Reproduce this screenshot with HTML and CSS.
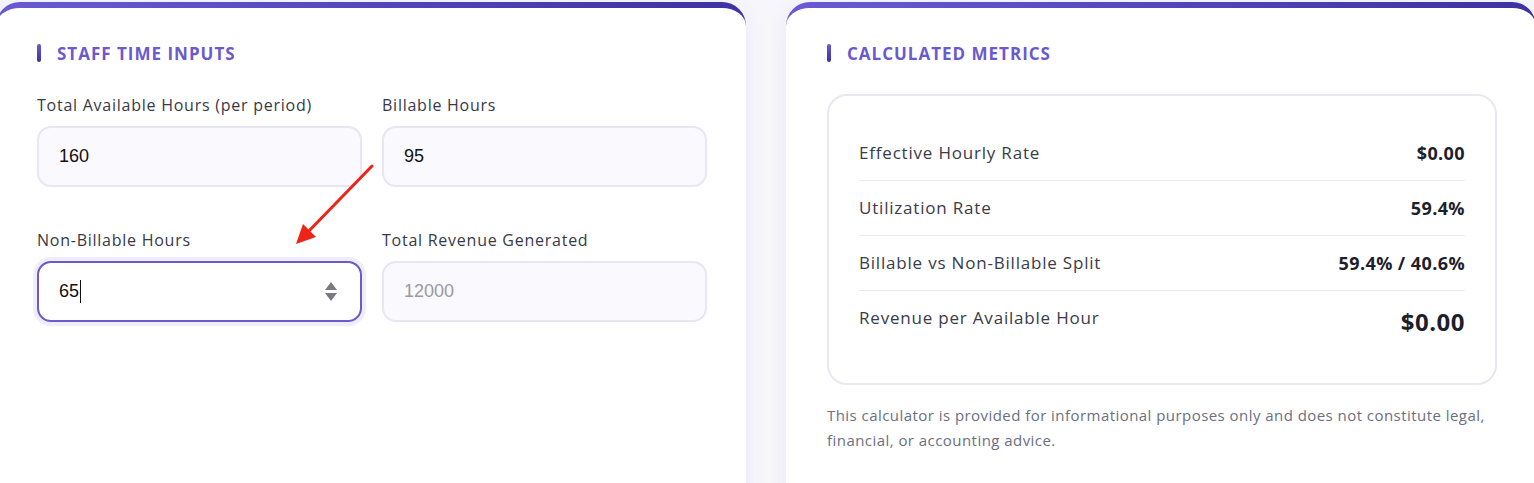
FILE: index.html
```html
<!DOCTYPE html>
<html lang="en">
<head>
<meta charset="utf-8">
<title>Staff Time Calculator</title>
<link rel="stylesheet" href="styles.css">
</head>
<body>
<div class="page">
  <section class="card">
    <h2 class="section-title"><span class="accent"></span>STAFF TIME INPUTS</h2>
    <div class="form-grid">
      <div class="field">
        <label class="label">Total Available Hours (per period)</label>
        <input class="input" type="text" value="160">
      </div>
      <div class="field">
        <label class="label">Billable Hours</label>
        <input class="input" type="text" value="95">
      </div>
      <div class="field">
        <label class="label">Non-Billable Hours</label>
        <div class="input-wrap">
          <input class="input focused" type="text" value="65">
          <span class="caret"></span>
          <span class="spinner"><span class="up"></span><span class="down"></span></span>
        </div>
      </div>
      <div class="field">
        <label class="label">Total Revenue Generated</label>
        <input class="input" type="text" placeholder="12000">
      </div>
    </div>
    <svg class="arrow" width="90" height="90" viewBox="0 0 90 90">
      <line x1="82" y1="4" x2="16" y2="72" stroke="#ee2418" stroke-width="3" stroke-linecap="round"/>
      <polygon points="6,82 13,62 26,75" fill="#ee2418"/>
    </svg>
  </section>
  <section class="card">
    <h2 class="section-title"><span class="accent"></span>CALCULATED METRICS</h2>
    <div class="metrics">
      <div class="row"><span class="name">Effective Hourly Rate</span><span class="value">$0.00</span></div>
      <div class="row"><span class="name">Utilization Rate</span><span class="value">59.4%</span></div>
      <div class="row"><span class="name">Billable vs Non-Billable Split</span><span class="value">59.4% / 40.6%</span></div>
      <div class="row last"><span class="name">Revenue per Available Hour</span><span class="value big">$0.00</span></div>
    </div>
    <p class="disclaimer">This calculator is provided for informational purposes only and does not constitute legal, financial, or accounting advice.</p>
  </section>
</div>
</body>
</html>
```

FILE: styles.css
```css
html, body {
  margin: 0;
  padding: 0;
  background: #f7f6fb;
  overflow: hidden;
}
body {
  font-family: "Open Sans", Lato, sans-serif;
  color: #3a3b48;
}
.page {
  display: grid;
  grid-template-columns: 750px 750px;
  gap: 40px;
  margin-left: -4px;
  padding-top: 2px;
  width: 1540px;
}
.card {
  position: relative;
  border-radius: 24px;
  border-top: 6px solid transparent;
  background-image: linear-gradient(#fff, #fff), linear-gradient(90deg, #6a5bd3, #3d31a3);
  background-origin: border-box;
  background-clip: padding-box, border-box;
  box-shadow: 0 4px 20px rgba(90, 80, 160, 0.08);
  padding: 33px 39px 60px 41px;
  height: 520px;
  box-sizing: border-box;
}
.section-title {
  display: flex;
  align-items: center;
  gap: 16px;
  margin: 0 0 29px;
  height: 24px;
  font-size: 17px;
  font-weight: 700;
  letter-spacing: 1px;
  color: #6a5acd;
}
.accent {
  width: 4px;
  height: 18px;
  border-radius: 2px;
  background: linear-gradient(180deg, #6a5bd3, #3d31a3);
}
.form-grid {
  display: grid;
  grid-template-columns: 1fr 1fr;
  column-gap: 20px;
  row-gap: 42px;
}
.field {
  display: flex;
  flex-direction: column;
}
.label {
  font-size: 16px;
  line-height: 22px;
  letter-spacing: 0.75px;
  margin-bottom: 10px;
  color: #383947;
}
.input-wrap {
  position: relative;
}
.input {
  box-sizing: border-box;
  width: 100%;
  height: 61px;
  border: 2px solid #e7e6f2;
  border-radius: 14px;
  background: #faf9fd;
  padding: 0 20px;
  font-family: "Liberation Sans", Arial, sans-serif;
  font-size: 18px;
  color: #111;
  outline: none;
}
.input::placeholder {
  color: #9a9aa2;
}
.input.focused {
  background: #fff;
  border-color: #6a5acd;
  box-shadow: 0 0 0 4px #efedfc;
}
.caret {
  position: absolute;
  left: 43px;
  top: 19px;
  width: 1px;
  height: 23px;
  background: #111;
}
.spinner {
  position: absolute;
  right: 25px;
  top: 21px;
  display: flex;
  flex-direction: column;
  gap: 3px;
}
.spinner .up {
  width: 0; height: 0;
  border-left: 6px solid transparent;
  border-right: 6px solid transparent;
  border-bottom: 8px solid #7a7a80;
}
.spinner .down {
  width: 0; height: 0;
  border-left: 6px solid transparent;
  border-right: 6px solid transparent;
  border-top: 8px solid #7a7a80;
}
.arrow {
  position: absolute;
  left: 294px;
  top: 154px;
}
.metrics {
  border: 2px solid #e8e7f4;
  border-radius: 20px;
  padding: 30px 30px 30px;
}
.row {
  display: flex;
  justify-content: space-between;
  align-items: flex-start;
  padding: 15px 0;
  line-height: 24px;
  border-bottom: 1px solid #e9e8f3;
}
.row.last { border-bottom: none; }
.name {
  font-size: 17px;
  letter-spacing: 0.8px;
  color: #3a3b48;
}
.value {
  font-size: 18px;
  font-weight: 700;
  letter-spacing: 0.4px;
  color: #1e1f2a;
}
.value.big {
  font-size: 24px;
  line-height: 32px;
  letter-spacing: 0.5px;
}
.disclaimer {
  margin: 18px 0 0;
  font-size: 15px;
  line-height: 25px;
  letter-spacing: 0.45px;
  color: #6b6f82;
}
```
